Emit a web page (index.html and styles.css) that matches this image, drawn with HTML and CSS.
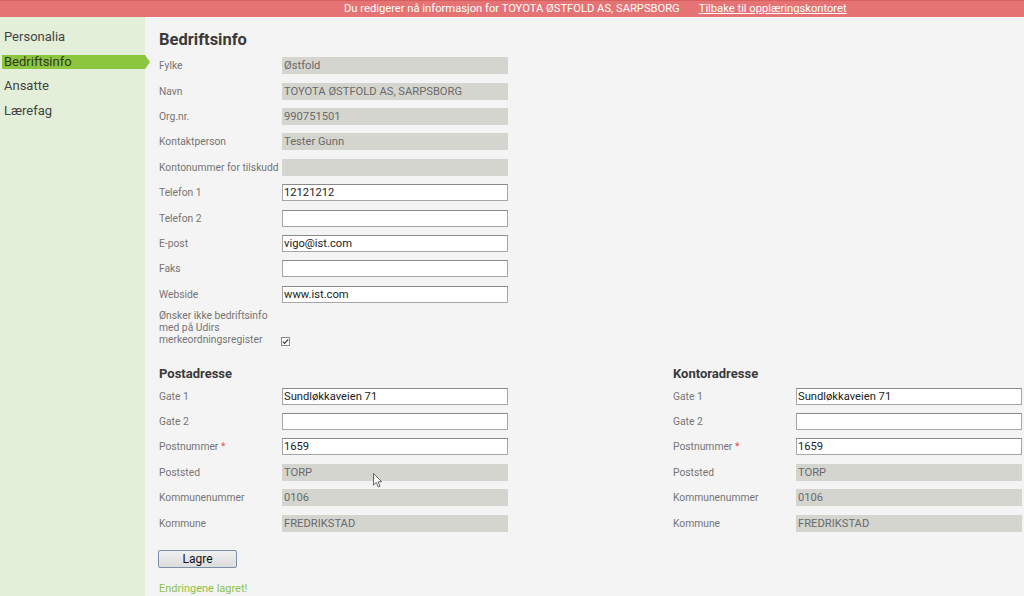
FILE: index.html
```html
<!DOCTYPE html>
<html lang="no">
<head>
<meta charset="utf-8">
<title>Bedriftsinfo</title>
<link rel="stylesheet" href="styles.css">
</head>
<body>
<div class="banner">
  <span class="banner-text">Du redigerer nå informasjon for TOYOTA ØSTFOLD AS, SARPSBORG</span>
  <a class="banner-link" href="#">Tilbake til opplæringskontoret</a>
</div>
<div class="layout">
  <nav class="sidebar">
    <a class="nav-item" href="#">Personalia</a>
    <a class="nav-item active" href="#">Bedriftsinfo</a>
    <a class="nav-item" href="#">Ansatte</a>
    <a class="nav-item" href="#">Lærefag</a>
  </nav>
  <main class="main">
    <h1 class="title">Bedriftsinfo</h1>
    <div class="form">
      <div class="row"><span class="label">Fylke</span><span class="field ro">Østfold</span></div>
      <div class="row"><span class="label">Navn</span><span class="field ro">TOYOTA ØSTFOLD AS, SARPSBORG</span></div>
      <div class="row"><span class="label">Org.nr.</span><span class="field ro">990751501</span></div>
      <div class="row"><span class="label">Kontaktperson</span><span class="field ro">Tester Gunn</span></div>
      <div class="row"><span class="label">Kontonummer for tilskudd</span><span class="field ro"></span></div>
      <div class="row"><span class="label">Telefon 1</span><span class="field">12121212</span></div>
      <div class="row"><span class="label">Telefon 2</span><span class="field"></span></div>
      <div class="row"><span class="label">E-post</span><span class="field">vigo@ist.com</span></div>
      <div class="row"><span class="label">Faks</span><span class="field"></span></div>
      <div class="row"><span class="label">Webside</span><span class="field">www.ist.com</span></div>
      <div class="row check-row">
        <span class="label multi">Ønsker ikke bedriftsinfo med på Udirs merkeordningsregister</span>
        <span class="checkbox"><svg width="9" height="9" viewBox="0 0 9 9"><path d="M1.8 4.6 L3.6 6.4 L7.2 2.4" fill="none" stroke="#333" stroke-width="1.1"/></svg></span>
      </div>
    </div>
    <div class="addresses">
      <section class="address">
        <h2 class="subtitle">Postadresse</h2>
        <div class="row"><span class="label">Gate 1</span><span class="field">Sundløkkaveien 71</span></div>
        <div class="row"><span class="label">Gate 2</span><span class="field"></span></div>
        <div class="row"><span class="label">Postnummer <span class="req">*</span></span><span class="field">1659</span></div>
        <div class="row"><span class="label">Poststed</span><span class="field ro">TORP</span></div>
        <div class="row"><span class="label">Kommunenummer</span><span class="field ro">0106</span></div>
        <div class="row"><span class="label">Kommune</span><span class="field ro">FREDRIKSTAD</span></div>
      </section>
      <section class="address">
        <h2 class="subtitle">Kontoradresse</h2>
        <div class="row"><span class="label">Gate 1</span><span class="field">Sundløkkaveien 71</span></div>
        <div class="row"><span class="label">Gate 2</span><span class="field"></span></div>
        <div class="row"><span class="label">Postnummer <span class="req">*</span></span><span class="field">1659</span></div>
        <div class="row"><span class="label">Poststed</span><span class="field ro">TORP</span></div>
        <div class="row"><span class="label">Kommunenummer</span><span class="field ro">0106</span></div>
        <div class="row"><span class="label">Kommune</span><span class="field ro">FREDRIKSTAD</span></div>
      </section>
    </div>
    <button class="save" type="button">Lagre</button>
    <p class="saved">Endringene lagret!</p>
    <svg class="cursor" width="11" height="16" viewBox="0 0 11 16"><path d="M0.5 0.5 L0.5 12 L3.3 9.4 L5.3 14 L7 13.2 L5.1 8.8 L8.8 8.8 Z" fill="#fff" stroke="#555" stroke-width="0.9"/></svg>
  </main>
</div>
</body>
</html>
```
FILE: styles.css
```css
* { box-sizing: border-box; }
html, body { margin: 0; padding: 0; }
body {
  font-family: Roboto, "Liberation Sans", sans-serif;
  background: #f4f4f4;
  color: #333;
  width: 1024px;
  height: 596px;
  overflow: hidden;
}
.banner {
  height: 17px;
  background: #e57373;
  border-top: 1px solid #d96060;
  display: flex;
  align-items: center;
  padding-left: 344px;
  gap: 19px;
  font-size: 11.2px;
  line-height: 14px;
  color: #fff;
}
.banner-link { color: #fff; text-decoration: underline; }
.layout {
  display: flex;
  height: 579px;
}
.sidebar {
  width: 145px;
  flex: none;
  background: #e3efd8;
  padding: 13px 0 0 2px;
  display: flex;
  flex-direction: column;
}
.nav-item {
  position: relative;
  display: block;
  font-size: 13px;
  line-height: 14px;
  height: 14px;
  padding-left: 2px;
  margin-bottom: 10.6px;
  color: #444;
  text-decoration: none;
}
.nav-item.active {
  background: #8cc63f;
  color: #2f3a20;
}
.nav-item.active::after {
  content: "";
  position: absolute;
  right: -5px;
  top: 0;
  border-top: 7px solid transparent;
  border-bottom: 7px solid transparent;
  border-left: 5px solid #8cc63f;
}
.main {
  position: relative;
  flex: 1;
  padding: 13px 0 0 14px;
}
.title {
  margin: 0 0 4px;
  font-size: 16.5px;
  line-height: 19px;
  font-weight: 700;
  color: #3a3a3a;
}
.row {
  display: flex;
  align-items: center;
  height: 25.4px;
}
.label {
  width: 123px;
  flex: none;
  font-size: 10.3px;
  color: #747474;
  white-space: nowrap;
}
.label.multi {
  white-space: normal;
  width: 115px;
  margin-right: 8px;
  line-height: 12.2px;
}
.req { color: #e0554f; }
.field {
  width: 226px;
  height: 17px;
  display: flex;
  align-items: center;
  padding-left: 1px;
  font-size: 11.2px;
  color: #222;
  background: #fff;
  border: 1px solid #a6a6a6;
  border-top-color: #8a8a8a;
  white-space: nowrap;
}
.field.ro {
  background: #d5d5d0;
  border-color: #d5d5d0;
  color: #6a6a6a;
}
.check-row {
  height: auto;
  align-items: flex-end;
  margin-top: 3px;
}
.checkbox {
  width: 9px;
  height: 9px;
  border: 1px solid #8a8a8a;
  background: #fff;
  margin: 0 0 1px -1px;
  display: flex;
  align-items: center;
  justify-content: center;
}
.checkbox svg { display: block; flex: none; }
.addresses {
  display: grid;
  grid-template-columns: 514px 1fr;
  margin-top: 19px;
}
.subtitle {
  margin: 0 0 2px;
  font-size: 13px;
  line-height: 16px;
  font-weight: 700;
  color: #3a3a3a;
}
.save {
  display: block;
  margin: 14px 0 0 -1px;
  width: 79px;
  height: 18px;
  padding: 0;
  font-family: Roboto, "Liberation Sans", sans-serif;
  font-size: 12px;
  color: #111;
  background: linear-gradient(#f0f0f0, #dcdcdc);
  border: 1px solid #7d8ea8;
  border-radius: 2px;
}
.saved {
  margin: 14px 0 0;
  font-size: 11px;
  line-height: 14px;
  color: #8bc34a;
}
.cursor {
  position: absolute;
  left: 228px;
  top: 456px;
}
```
